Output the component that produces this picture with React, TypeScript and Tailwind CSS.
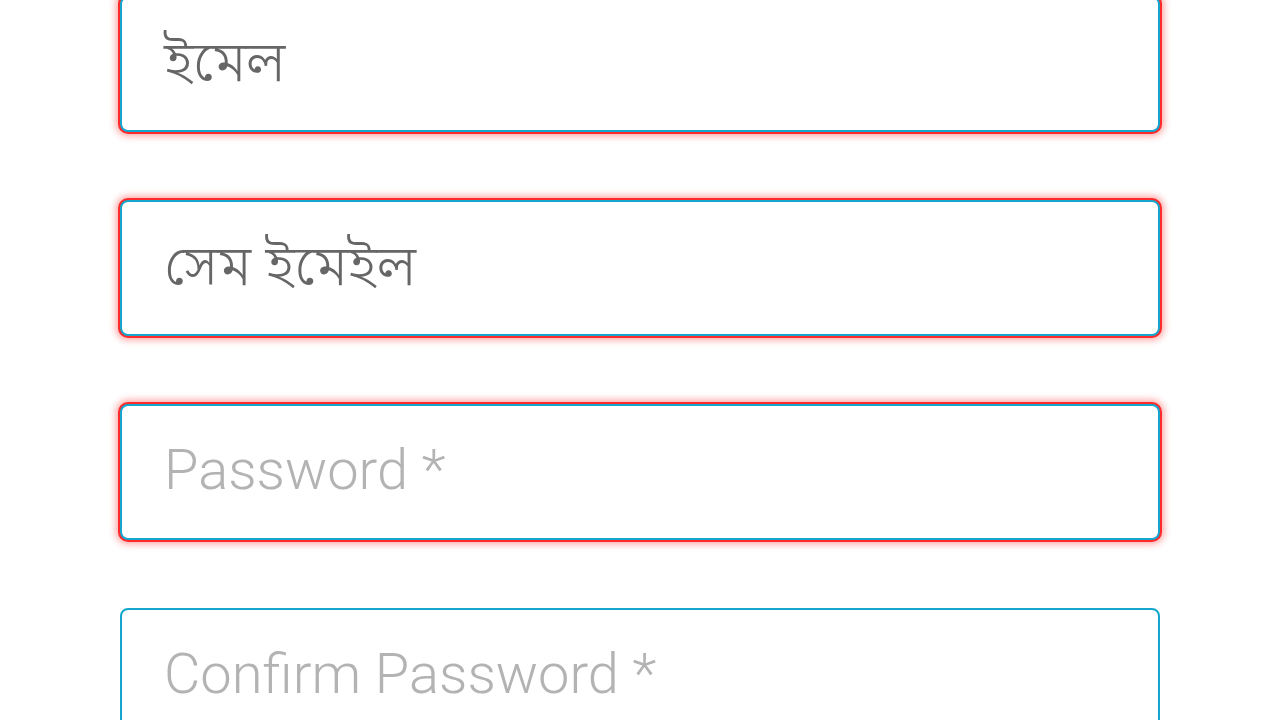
import React from "react";

function Field({ value, placeholder, error }: { value?: string; placeholder?: string; error?: boolean }) {
  return (
    <div
      className={`h-[136px] w-[1040px] shrink-0 rounded-[8px] border-2 border-[#14a6cc] bg-white flex items-center pl-[42px] ${
        error ? "shadow-[0_0_0_2px_#ff2a2a,0_0_7px_4px_rgba(255,50,50,0.45)]" : ""
      }`}
    >
      {value ? (
        <span className="text-[56px] leading-none font-light text-[#666666] pt-[6px] [font-family:'Noto_Sans_Bengali','Lohit_Bengali','Noto_Sans',sans-serif]">
          {value}
        </span>
      ) : (
        <span className="text-[56px] leading-none font-light text-[#b3b3b3] pb-[4px] [font-family:Roboto,'Noto_Sans',sans-serif]">
          {placeholder}
        </span>
      )}
    </div>
  );
}

export default function App() {
  return (
    <div className="w-[1280px] h-[720px] overflow-hidden bg-white">
      <div className="flex flex-col items-start pl-[120px] gap-[68px] -mt-[4px]">
        <Field value="ইমেল" error />
        <Field value="সেম ইমেইল" error />
        <Field placeholder="Password *" error />
        <Field placeholder="Confirm Password *" />
      </div>
    </div>
  );
}
